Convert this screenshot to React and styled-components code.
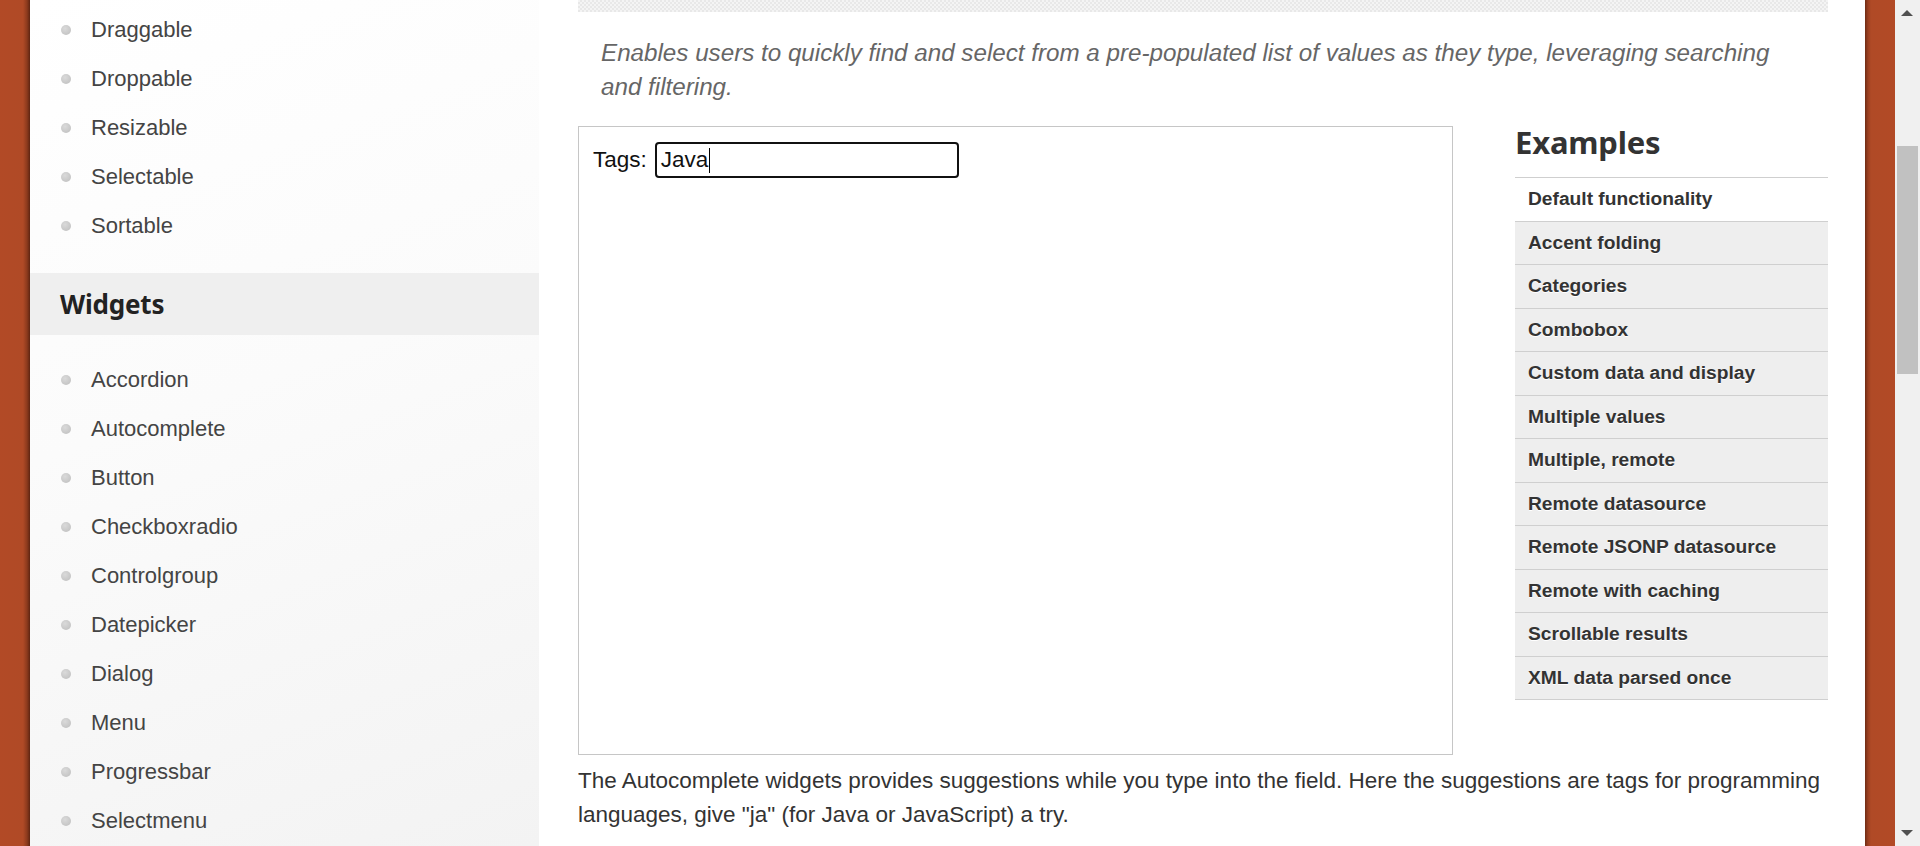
import React from "react";
import styled, { createGlobalStyle } from "styled-components";

const coreItems = ["Draggable", "Droppable", "Resizable", "Selectable", "Sortable"];
const widgetItems = [
  "Accordion",
  "Autocomplete",
  "Button",
  "Checkboxradio",
  "Controlgroup",
  "Datepicker",
  "Dialog",
  "Menu",
  "Progressbar",
  "Selectmenu",
];
const examples = [
  "Default functionality",
  "Accent folding",
  "Categories",
  "Combobox",
  "Custom data and display",
  "Multiple values",
  "Multiple, remote",
  "Remote datasource",
  "Remote JSONP datasource",
  "Remote with caching",
  "Scrollable results",
  "XML data parsed once",
];

export default function App() {
  return (
    <>
      <GlobalStyle />
      <Page>
        <OrangeEdge />
        <Sidebar>
          <NavList>
            {coreItems.map((item) => (
              <NavItem key={item}>
                <Bullet />
                {item}
              </NavItem>
            ))}
          </NavList>
          <SectionTitle>Widgets</SectionTitle>
          <NavList $top={20}>
            {widgetItems.map((item) => (
              <NavItem key={item}>
                <Bullet />
                {item}
              </NavItem>
            ))}
          </NavList>
        </Sidebar>

        <Main>
          <PatternBar />
          <Lead>
            Enables users to quickly find and select from a pre-populated list of values as they
            type, leveraging searching and filtering.
          </Lead>
          <DemoRow>
            <DemoFrame>
              <Field>
                <label htmlFor="tags">Tags:</label>
                <TagInput id="tags">
                  Java
                  <Caret />
                </TagInput>
              </Field>
            </DemoFrame>
            <Aside>
              <AsideTitle>Examples</AsideTitle>
              <ExampleList>
                {examples.map((ex, i) => (
                  <ExampleItem key={ex} $active={i === 0}>
                    {ex}
                  </ExampleItem>
                ))}
              </ExampleList>
            </Aside>
          </DemoRow>
          <Body>
            The Autocomplete widgets provides suggestions while you type into the field. Here the
            suggestions are tags for programming languages, give "ja" (for Java or JavaScript) a
            try.
          </Body>
        </Main>

        <OrangeEdge />
        <Scrollbar>
          <Arrow $dir="up" />
          <Track>
            <Thumb />
          </Track>
          <Arrow $dir="down" />
        </Scrollbar>
      </Page>
    </>
  );
}

const GlobalStyle = createGlobalStyle`
  html, body {
    margin: 0;
    padding: 0;
    overflow: hidden;
  }
  body {
    font-family: "Liberation Sans", Arial, sans-serif;
    background: #fff;
  }
`;

const Page = styled.div`
  display: flex;
  width: 1920px;
  height: 846px;
  overflow: hidden;
`;

const OrangeEdge = styled.div`
  flex: 0 0 30px;
  background: linear-gradient(to right, #6e2b14 0px, #9a3f20 3px, #b04a26 6px, #b24a26 100%);
  &:first-child {
    background: linear-gradient(to right, #b24a26 0, #b04a26 23px, #8c3a1d 27px, #5e2411 30px);
  }
`;

const Sidebar = styled.nav`
  flex: 0 0 509px;
  background: linear-gradient(160deg, #ffffff 0%, #fbfbfb 45%, #f3f3f3 100%);
  padding-top: 5px;
`;

const NavList = styled.ul`
  list-style: none;
  margin: ${(p) => p.$top || 0}px 0 0;
  padding: 0 0 0 30px;
`;

const NavItem = styled.li`
  display: flex;
  align-items: center;
  height: 49px;
  font-size: 22px;
  color: #444;
`;

const Bullet = styled.span`
  width: 10px;
  height: 10px;
  border-radius: 50%;
  background: radial-gradient(circle at 40% 35%, #dadada, #bdbdbd);
  margin: 0 20px 0 1px;
`;

const SectionTitle = styled.h2`
  margin: 23px 0 0;
  height: 62px;
  display: flex;
  align-items: center;
  padding-left: 30px;
  background: #efefef;
  font-family: "Noto Sans", "Open Sans", sans-serif;
  font-weight: 700;
  font-size: 26px;
  color: #222;
  letter-spacing: -0.2px;
`;

const Main = styled.main`
  flex: 0 0 1326px;
  box-sizing: border-box;
  padding: 0 37px 0 39px;
  background: #fff;
`;

const PatternBar = styled.div`
  height: 12px;
  background-color: #efefef;
  background-image: repeating-conic-gradient(#e8e8e8 0 25%, #f4f4f4 0 50%);
  background-size: 4px 4px;
`;

const Lead = styled.p`
  margin: 24px 0 0;
  padding: 0 40px 0 23px;
  font-size: 24.2px;
  line-height: 34px;
  font-style: italic;
  color: #666;
`;

const DemoRow = styled.div`
  display: flex;
  gap: 62px;
  margin-top: 22px;
`;

const DemoFrame = styled.div`
  flex: 0 0 875px;
  height: 629px;
  box-sizing: border-box;
  border: 1px solid #c6c6c6;
  padding: 15px 14px;
`;

const Field = styled.div`
  display: flex;
  align-items: center;
  gap: 8px;
  font-size: 22.5px;
  color: #111;
`;

const TagInput = styled.div`
  display: flex;
  align-items: center;
  width: 304px;
  height: 36px;
  box-sizing: border-box;
  border: 2px solid #111;
  border-radius: 4px;
  padding: 0 4px;
  font-size: 22.5px;
  color: #111;
`;

const Caret = styled.span`
  width: 1px;
  height: 25px;
  background: #000;
  margin-left: 1px;
`;

const Aside = styled.aside`
  flex: 1;
`;

const AsideTitle = styled.h2`
  margin: 0;
  height: 51px;
  line-height: 32px;
  font-family: "Noto Sans", "Open Sans", sans-serif;
  font-weight: 700;
  font-size: 31px;
  color: #333;
  letter-spacing: -0.2px;
`;

const ExampleList = styled.ul`
  list-style: none;
  margin: 0;
  padding: 0;
  border-top: 1px solid #cfcfcf;
`;

const ExampleItem = styled.li`
  height: 43.5px;
  box-sizing: border-box;
  display: flex;
  align-items: center;
  padding-left: 13px;
  border-bottom: 1px solid #cfcfcf;
  background: ${(p) => (p.$active ? "#fff" : "#eeeeee")};
  font-size: 19.2px;
  font-weight: 700;
  color: #333;
  text-shadow: 0 1px 0 #fff;
`;

const Body = styled.p`
  margin: 9px 0 0;
  font-size: 22.5px;
  line-height: 34px;
  color: #333;
`;

const Scrollbar = styled.div`
  flex: 0 0 25px;
  display: flex;
  flex-direction: column;
  align-items: center;
  background: #f0f0f0;
`;

const Arrow = styled.div`
  flex: 0 0 25px;
  width: 100%;
  position: relative;
  &::after {
    content: "";
    position: absolute;
    left: 6px;
    ${(p) => (p.$dir === "up" ? "top: 10px;" : "bottom: 10px;")}
    border-left: 6px solid transparent;
    border-right: 6px solid transparent;
    ${(p) =>
      p.$dir === "up" ? "border-bottom: 6px solid #505050;" : "border-top: 6px solid #505050;"}
  }
`;

const Track = styled.div`
  flex: 1;
  width: 100%;
  padding-top: 121px;
  box-sizing: border-box;
`;

const Thumb = styled.div`
  width: 21px;
  height: 228px;
  margin-left: 2px;
  background: #c1c1c1;
`;
